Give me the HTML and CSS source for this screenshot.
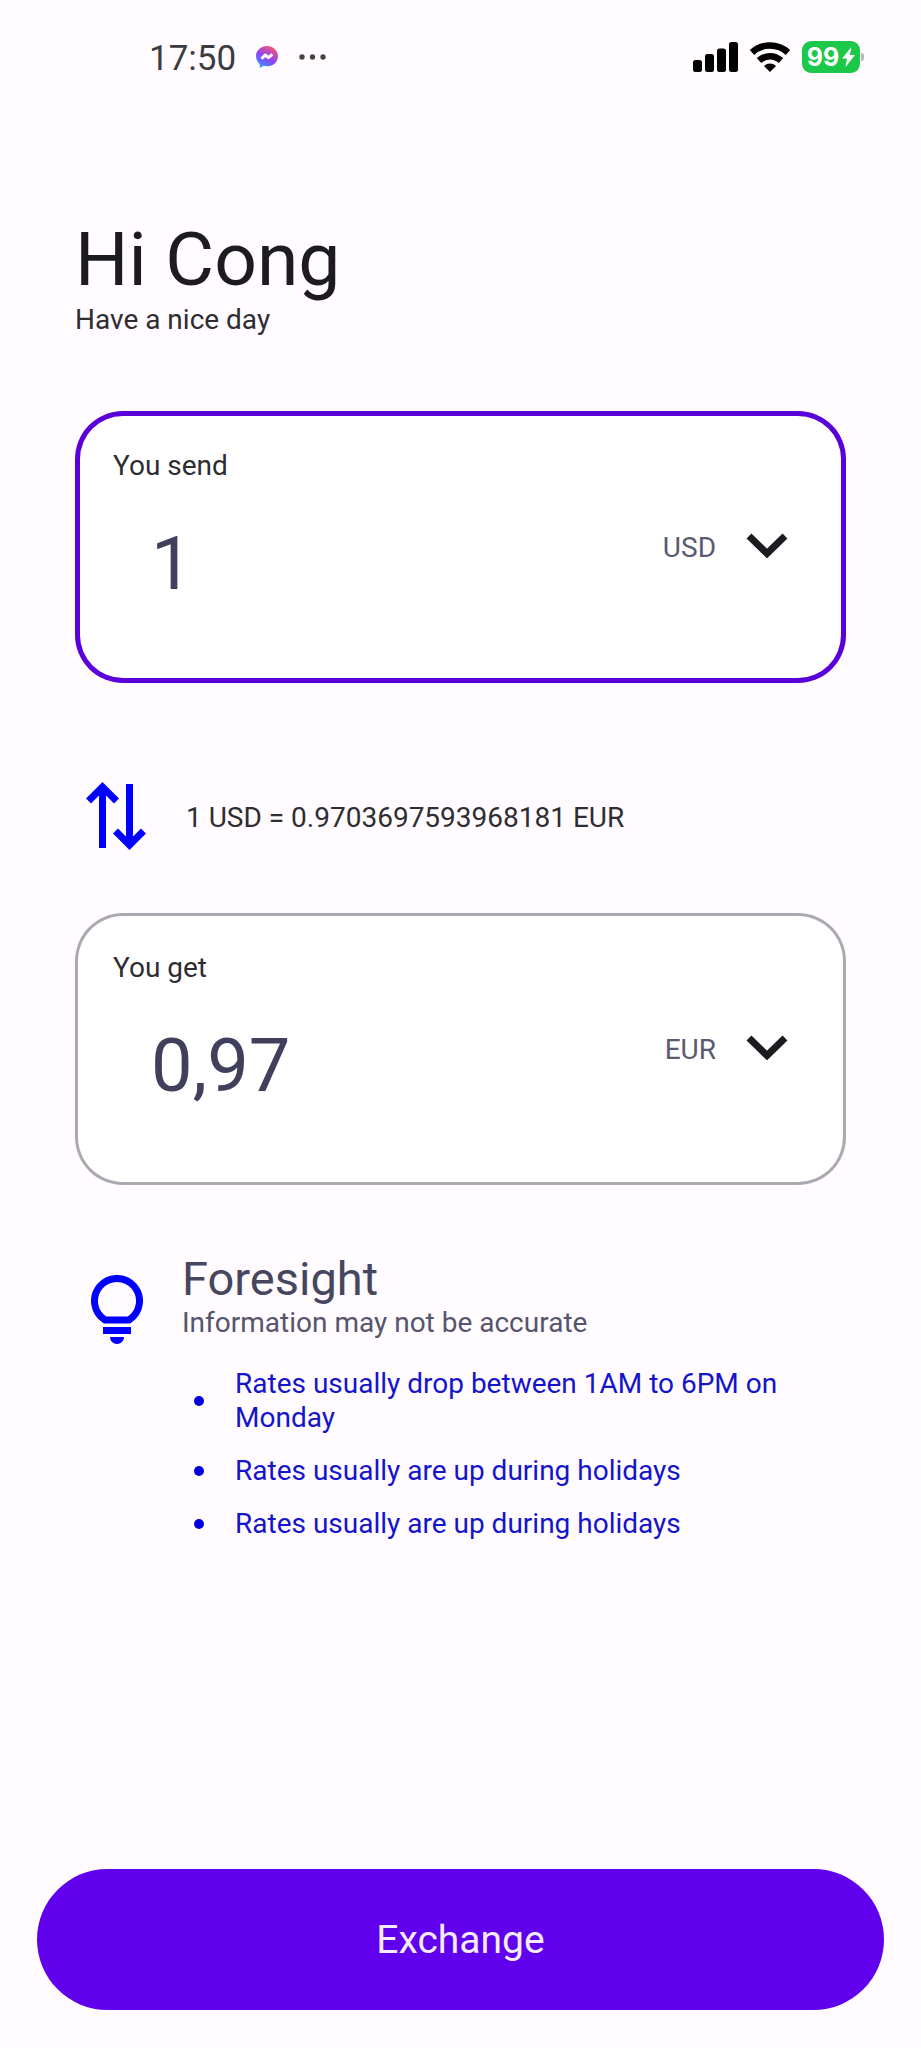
FILE: index.html
```html
<!DOCTYPE html>
<html lang="en">
<head>
<meta charset="utf-8">
<meta name="viewport" content="width=device-width, initial-scale=1">
<title>Exchange</title>
<link rel="stylesheet" href="styles.css">
</head>
<body>
<header class="status">
  <div class="status-left">
    <time class="clock">17:50</time>
    <svg class="messenger" width="22" height="24" viewBox="0 0 22 24" aria-hidden="true">
      <defs>
        <linearGradient id="bubble" x1="0.2" y1="1" x2="0.8" y2="0">
          <stop offset="0" stop-color="#2a9bff"/>
          <stop offset="0.45" stop-color="#8a45f5"/>
          <stop offset="1" stop-color="#ff5568"/>
        </linearGradient>
      </defs>
      <path d="M11 1C5 1 0 5.300 0 11.200c0 3.200 1.500 5.800 3.800 7.700V23l3.700-2.200c1.100.3 2.300.5 3.500.5 6.100 0 11-4.300 11-10.100S17.100 1 11 1z" fill="url(#bubble)"/>
      <path d="M5.500 13.700l3.700-3.700 3.200 2.600 4-3.200" fill="none" stroke="#fff" stroke-width="3" stroke-linejoin="round"/>
    </svg>
    <svg width="27" height="6" viewBox="0 0 27 6" fill="#444" aria-hidden="true">
      <circle cx="3" cy="3" r="2.700"/><circle cx="13.500" cy="3" r="2.700"/><circle cx="24" cy="3" r="2.700"/>
    </svg>
  </div>
  <div class="status-right">
    <svg width="45" height="30" viewBox="0 0 45 30" aria-hidden="true">
      <rect x="0" y="18" width="9" height="12" rx="2.500"/><rect x="12" y="12" width="9" height="18" rx="2.500"/><rect x="24" y="6.500" width="9" height="23.500" rx="2.500"/><rect x="36" y="0" width="9" height="30" rx="2.500"/>
    </svg>
    <svg width="42" height="30" viewBox="0 0 42 30" aria-hidden="true">
      <path d="M3 10.500C13 1.200 29 1.200 39 10.500M10 18.500c6.500-5.800 15.500-5.800 22 0" fill="none" stroke="#000" stroke-width="6.500"/>
      <path d="M15 24c3.500-3.300 8.500-3.300 12 0L21 30z"/>
    </svg>
    <div class="battery">
      <span>99</span>
      <svg width="13" height="20" viewBox="0 0 13 20" fill="#fff" aria-hidden="true"><path d="M9.500 0L0 11.500h5L3.500 20 13 8H7.800z"/></svg>
    </div>
  </div>
</header>

<main class="content">
  <h1 class="title">Hi Cong</h1>
  <p class="subtitle">Have a nice day</p>

  <section class="card card-active">
    <label class="card-label" for="send">You send</label>
    <div class="card-row">
      <input class="amount" id="send" type="text" inputmode="decimal" value="1">
      <div class="currency">
        <select class="currency-select" aria-label="Send currency"><option>USD</option><option>EUR</option></select>
        <svg class="chevron" width="42" height="25" viewBox="0 0 42 25" aria-hidden="true"><path d="M3 3l18 17.500L39 3" fill="none" stroke="#1c1b1f" stroke-width="7"/></svg>
      </div>
    </div>
  </section>

  <div class="rate">
    <svg width="60" height="68" viewBox="0 0 60 68" fill="none" stroke="#00f" stroke-width="7" aria-hidden="true">
      <path d="M16.500 66V5M2.500 19l14-14 14 14M43.500 2v61M29.500 49l14 14 14-14"/>
    </svg>
    <p class="rate-text">1 USD = 0.9703697593968181 EUR</p>
  </div>

  <section class="card">
    <label class="card-label" for="get">You get</label>
    <div class="card-row">
      <input class="amount" id="get" type="text" inputmode="decimal" value="0,97">
      <div class="currency">
        <select class="currency-select" aria-label="Receive currency"><option>EUR</option><option>USD</option></select>
        <svg class="chevron" width="42" height="25" viewBox="0 0 42 25" aria-hidden="true"><path d="M3 3l18 17.500L39 3" fill="none" stroke="#1c1b1f" stroke-width="7"/></svg>
      </div>
    </div>
  </section>

  <section class="foresight">
    <svg class="bulb" width="52" height="69" viewBox="0 0 52 69" aria-hidden="true">
      <path d="M14 45A22.500 22.500 0 1 1 38 45z" fill="none" stroke="#00f" stroke-width="7"/>
      <path d="M12 52h28v7H12zM19 62h14a7 7 0 0 1-14 0z" fill="#00f"/>
    </svg>
    <div class="foresight-body">
      <h2 class="foresight-title">Foresight</h2>
      <p class="foresight-note">Information may not be accurate</p>
      <ul class="tips">
        <li class="tip">Rates usually drop between 1AM to 6PM on Monday</li>
        <li class="tip">Rates usually are up during holidays</li>
        <li class="tip">Rates usually are up during holidays</li>
      </ul>
    </div>
  </section>
</main>

<footer class="actions">
  <button class="exchange" type="button">Exchange</button>
</footer>
</body>
</html>
```
FILE: styles.css
```css
* {
  box-sizing: border-box;
}

body {
  margin: 0;
  min-height: 100vh;
  display: flex;
  flex-direction: column;
  background: #fffbff;
  color: #2e2d31;
  font: 28px/34px Roboto, sans-serif;
}

h1, h2, p, ul {
  margin: 0;
  padding: 0;
  font-weight: 400;
}

svg {
  display: block;
  flex: none;
}

.status {
  display: flex;
  justify-content: space-between;
  align-items: center;
  padding: 36px 57px 0 149px;
  height: 78px;
}

.status-left {
  display: flex;
  align-items: center;
}

.clock {
  padding-top: 3px;
  font-size: 35px;
  line-height: 42px;
  color: #3c3c3f;
}

.messenger {
  margin: 0 21px 0 20px;
}

.status-right {
  display: flex;
  align-items: center;
  gap: 11px;
}

.battery {
  position: relative;
  display: flex;
  align-items: center;
  justify-content: center;
  gap: 3px;
  width: 58px;
  height: 32px;
  margin-right: 4px;
  border-radius: 9px;
  background: #1cc84a;
  color: #fff;
  font: 700 25px/32px Inter, sans-serif;
}

.battery::after {
  content: "";
  position: absolute;
  right: -4px;
  top: 12px;
  width: 3px;
  height: 8px;
  border-radius: 0 3px 3px 0;
  background: #b9b6bb;
}

.content {
  padding: 137px 75px 0;
}

.title {
  font-size: 75px;
  line-height: 88px;
  color: #1c1b1f;
}

.subtitle {
  margin-bottom: 74px;
}

.card {
  padding: 38px 58px 75px 38px;
  border-radius: 48px;
  background: #fff;
  box-shadow: inset 0 0 0 3px #a9a9af;
}

.card-active {
  box-shadow: inset 0 0 0 5px #5a00d8;
}

.card-label {
  display: block;
  margin-bottom: 37px;
}

.card-row {
  display: flex;
  align-items: flex-start;
  justify-content: space-between;
}

.amount {
  flex: 1;
  min-width: 0;
  height: 88px;
  padding: 0 0 0 38px;
  border: 0;
  outline: 0;
  background: none;
  font: 74px/88px Roboto, sans-serif;
  color: #40405c;
}

.currency {
  display: flex;
  align-items: center;
  gap: 30px;
  padding-top: 11px;
}

.currency-select {
  appearance: none;
  height: 34px;
  padding: 0;
  border: 0;
  background: none;
  font: 28px/34px Roboto, sans-serif;
  text-align-last: right;
  color: #5a5a70;
}

.chevron {
  margin-bottom: 5px;
}

.rate {
  display: flex;
  align-items: center;
  gap: 40px;
  padding: 99px 11px 63px;
}

.rate-text {
  padding-top: 3px;
}

.foresight {
  display: flex;
  align-items: flex-start;
  gap: 39px;
  padding: 67px 16px 40px;
}

.bulb {
  margin-top: 23px;
}

.foresight-title {
  font-size: 47px;
  line-height: 54px;
  color: #46465e;
}

.foresight-note {
  color: #55556b;
}

.tips {
  display: grid;
  gap: 19px;
  margin-top: 27px;
  list-style: none;
}

.tip {
  display: flex;
  align-items: center;
  gap: 31px;
  padding-left: 12px;
  color: #1414cc;
}

.tip::before {
  content: "";
  flex: none;
  width: 10px;
  height: 10px;
  border-radius: 50%;
  background: #00d;
}

.actions {
  display: flex;
  margin-top: auto;
  padding: 0 37px 38px;
}

.exchange {
  flex: 1;
  height: 141px;
  border: 0;
  border-radius: 71px;
  background: #6000ec;
  color: #f6ecff;
  font: 39px/46px Roboto, sans-serif;
}
```
